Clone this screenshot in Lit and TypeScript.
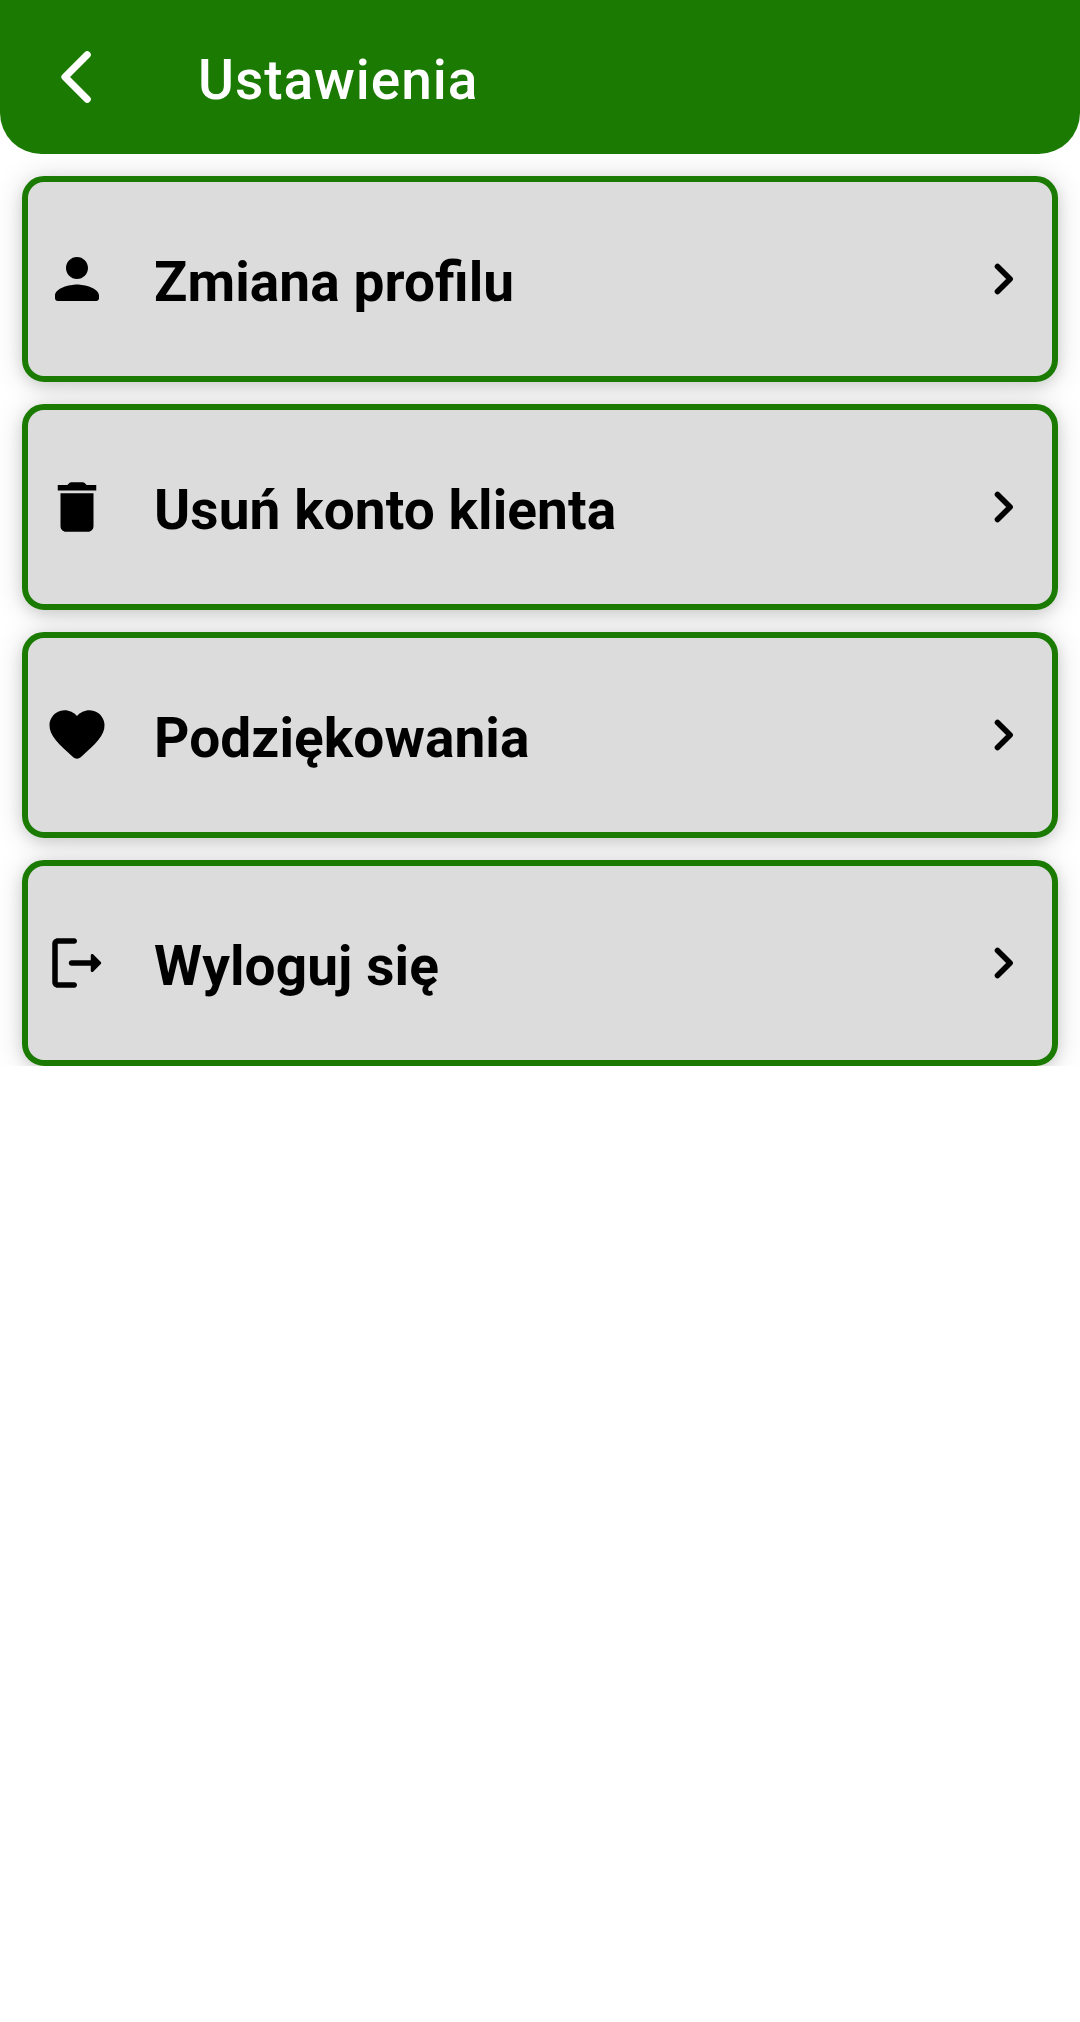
import { LitElement, html, css, svg } from "lit";
import { customElement } from "lit/decorators.js";

const icons = {
  person: svg`<path d="M12 12c2.21 0 4-1.79 4-4s-1.79-4-4-4-4 1.79-4 4 1.79 4 4 4zm0 2c-2.67 0-8 1.34-8 4v1c0 .55.45 1 1 1h14c.55 0 1-.45 1-1v-1c0-2.66-5.33-4-8-4z"/>`,
  trash: svg`<path d="M6 19c0 1.1.9 2 2 2h8c1.1 0 2-.9 2-2V7H6zM19 4h-3.5l-.71-.71c-.18-.18-.44-.29-.7-.29H9.91c-.26 0-.52.11-.7.29L8.5 4H5v2h14z"/>`,
  heart: svg`<path d="M13.35 20.13c-.76.69-1.93.69-2.69-.01l-.11-.1C5.3 15.27 1.87 12.16 2 8.28c.06-1.7.93-3.33 2.34-4.29 2.64-1.8 5.9-.96 7.66 1.1 1.76-2.06 5.02-2.91 7.66-1.1 1.41.96 2.28 2.59 2.34 4.29.14 3.88-3.3 6.99-8.55 11.76l-.1.09z"/>`,
  logout: svg`<path d="M5 5h6c.55 0 1-.45 1-1s-.45-1-1-1H5c-1.1 0-2 .9-2 2v14c0 1.1.9 2 2 2h6c.55 0 1-.45 1-1s-.45-1-1-1H5V5z"/><path d="M20.65 11.65l-2.79-2.79c-.32-.32-.86-.1-.86.35V11h-7c-.55 0-1 .45-1 1s.45 1 1 1h7v1.79c0 .45.54.67.85.35l2.79-2.79c.2-.19.2-.51.01-.7z"/>`,
};

const items = [
  { icon: icons.person, label: "Zmiana profilu" },
  { icon: icons.trash, label: "Usuń konto klienta" },
  { icon: icons.heart, label: "Podziękowania" },
  { icon: icons.logout, label: "Wyloguj się" },
];

@customElement("app-root")
export class AppRoot extends LitElement {
  static styles = css`
    :host {
      display: block;
      min-height: 2022px;
      background: #fff;
      font-family: Roboto, "Liberation Sans", sans-serif;
    }
    .bar {
      box-sizing: border-box;
      height: 154px;
      display: flex;
      align-items: flex-start;
      background: #1b7a02;
      border-radius: 0 0 41.25px 41.25px;
      color: #fff;
    }
    .back {
      all: unset;
      width: 66px;
      height: 66px;
      margin: 44px 88px 0 44px;
    }
    .title {
      margin: 48px 0 0;
      font-size: 55px;
      line-height: 64px;
      font-weight: 500;
      letter-spacing: 0.95px;
    }
    .list {
      display: flex;
      flex-direction: column;
      gap: 22px;
      padding: 22px 22px 0;
      overflow: hidden;
    }
    .shadow {
      border-radius: 22px;
      box-shadow: 0 2px 30px rgba(0, 0, 0, 0.14), 0 4px 14px rgba(0, 0, 0, 0.12);
    }
    .card {
      position: relative;
      z-index: 1;
      box-sizing: border-box;
      height: 206px;
      display: flex;
      align-items: center;
      padding: 0 16px;
      border: 6px solid #1b7a02;
      border-radius: 22px;
      background: #dcdcdc;
      color: #000;
    }
    svg {
      display: block;
      width: 66px;
      height: 66px;
      flex: none;
    }
    .fill {
      fill: currentColor;
    }
    .line {
      fill: none;
      stroke: currentColor;
      stroke-linecap: round;
      stroke-linejoin: round;
    }
    .label {
      flex: 1;
      padding: 6px 0 0 44px;
      font-size: 55px;
      line-height: 64px;
      font-weight: 700;
      letter-spacing: 0.08px;
      font-feature-settings: "liga" 1;
      white-space: nowrap;
    }
  `;

  render() {
    return html`
      <header class="bar">
        <button class="back" aria-label="Wstecz">
          <svg class="line" viewBox="0 0 66 66">
            <path stroke-width="7.2" d="M43.2 10.8 21 33l22.2 22.2" />
          </svg>
        </button>
        <h1 class="title">Ustawienia</h1>
      </header>
      <main class="list">
        ${items.map(
          (item) => html`
            <div class="shadow">
              <div class="card">
                <svg class="fill" viewBox="0 0 24 24">${item.icon}</svg>
                <span class="label">${item.label}</span>
                <svg class="line" viewBox="0 0 66 66">
                  <path stroke-width="5.6" d="M27.5 20.4 40.1 33 27.5 45.6" />
                </svg>
              </div>
            </div>
          `
        )}
      </main>
    `;
  }
}
